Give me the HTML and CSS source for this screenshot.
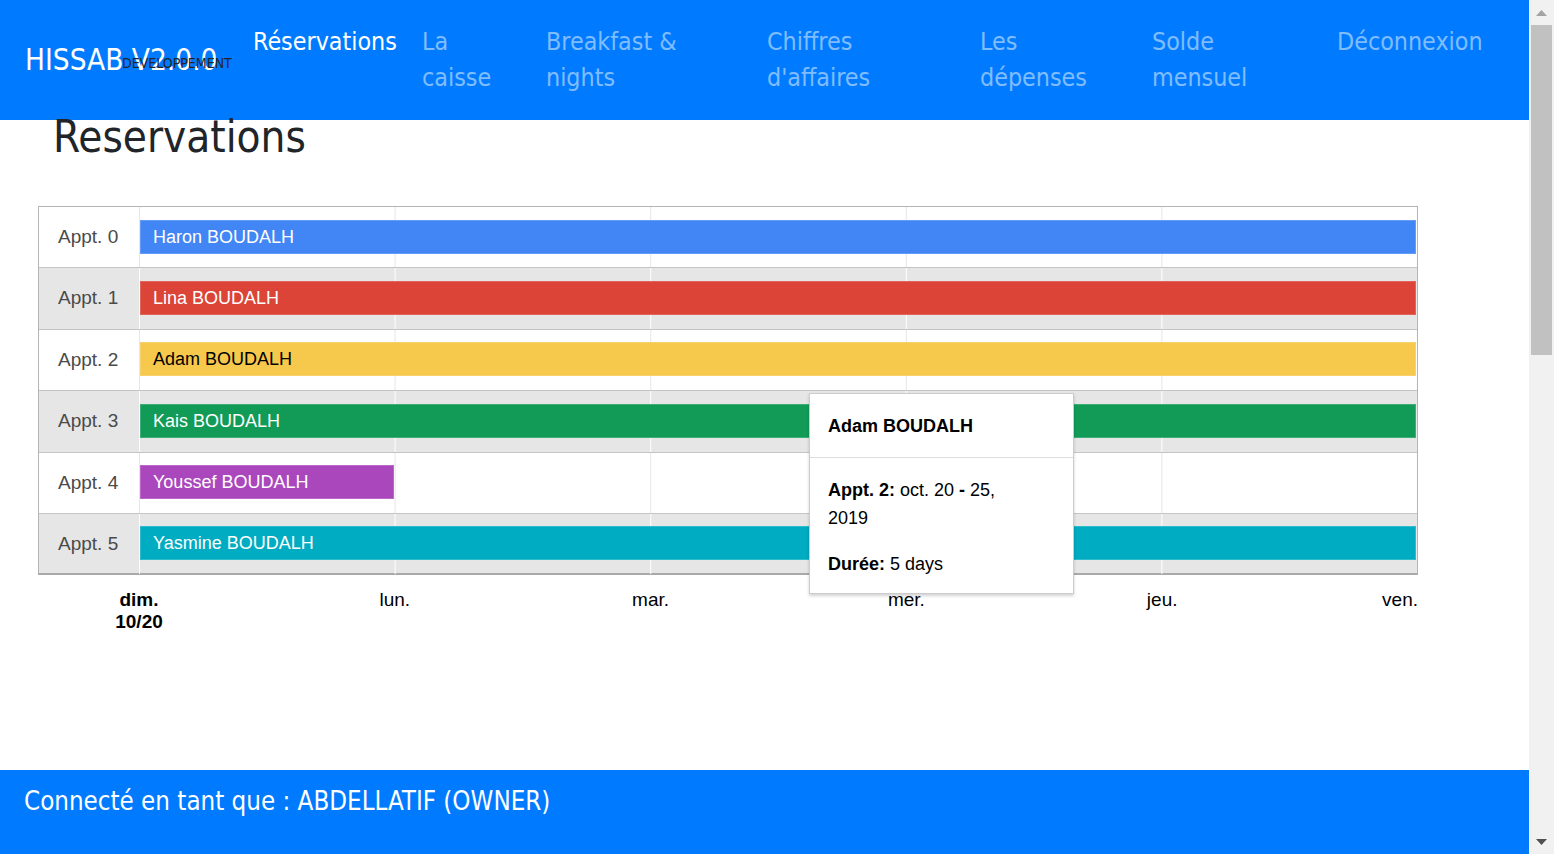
FILE: index.html
```html
<!DOCTYPE html>
<html lang="fr">
<head>
<meta charset="utf-8">
<title>HISSAB V2.0.0 – Réservations</title>
<link rel="stylesheet" href="styles.css">
</head>
<body>
<div class="window">
  <div class="app">
    <header class="topbar">
      <a class="brand">HISSAB V2.0.0<span class="env">DEVELOPPEMENT</span></a>
      <nav class="menu">
        <a class="menu-link active">Réservations</a>
        <a class="menu-link">La caisse</a>
        <a class="menu-link">Breakfast &amp; nights</a>
        <a class="menu-link">Chiffres d'affaires</a>
        <a class="menu-link">Les dépenses</a>
        <a class="menu-link">Solde mensuel</a>
        <a class="menu-link">Déconnexion</a>
      </nav>
    </header>

    <main class="content">
      <h1 class="page-title">Reservations</h1>

      <div class="timeline">
        <div class="rows">
          <div class="row">
            <div class="row-label">Appt. 0</div>
            <div class="track"><div class="bar bar-blue" style="width: calc(100% - 2px)">Haron BOUDALH</div></div>
          </div>
          <div class="row row-alt">
            <div class="row-label">Appt. 1</div>
            <div class="track"><div class="bar bar-red" style="width: calc(100% - 2px)">Lina BOUDALH</div></div>
          </div>
          <div class="row">
            <div class="row-label">Appt. 2</div>
            <div class="track"><div class="bar bar-yellow" style="width: calc(100% - 2px)">Adam BOUDALH</div></div>
          </div>
          <div class="row row-alt">
            <div class="row-label">Appt. 3</div>
            <div class="track"><div class="bar bar-green" style="width: calc(100% - 2px)">Kais BOUDALH</div></div>
          </div>
          <div class="row">
            <div class="row-label">Appt. 4</div>
            <div class="track"><div class="bar bar-purple" style="width: calc(20% - 2px)">Youssef BOUDALH</div></div>
          </div>
          <div class="row row-alt">
            <div class="row-label">Appt. 5</div>
            <div class="track"><div class="bar bar-teal" style="width: calc(100% - 2px)">Yasmine BOUDALH</div></div>
          </div>
        </div>

        <div class="axis">
          <div class="axis-track">
            <span class="tick tick-major" style="left: 0%">dim.<br>10/20</span>
            <span class="tick" style="left: 20%">lun.</span>
            <span class="tick" style="left: 40%">mar.</span>
            <span class="tick" style="left: 60%">mer.</span>
            <span class="tick" style="left: 80%">jeu.</span>
            <span class="tick tick-end">ven.</span>
          </div>
        </div>

        <div class="tooltip">
          <div class="tooltip-head">Adam BOUDALH</div>
          <div class="tooltip-body">
            <p class="tooltip-line"><b>Appt. 2:</b> oct. 20 <b>-</b> 25, 2019</p>
            <p class="tooltip-line"><b>Durée:</b> 5 days</p>
          </div>
        </div>
      </div>
    </main>

    <footer class="status">Connecté en tant que : ABDELLATIF (OWNER)</footer>
  </div>

  <div class="scrollbar" aria-hidden="true">
    <div class="sb-btn">
      <svg width="11" height="6" viewBox="0 0 11 6"><polygon points="0,6 5.5,0 11,6" fill="#a3a3a3"/></svg>
    </div>
    <div class="sb-thumb"></div>
    <div class="sb-space"></div>
    <div class="sb-btn">
      <svg width="11" height="6" viewBox="0 0 11 6"><polygon points="0,0 11,0 5.5,6" fill="#505050"/></svg>
    </div>
  </div>
</div>
</body>
</html>
```

FILE: styles.css
```css
* { box-sizing: border-box; }

html, body {
  margin: 0;
  padding: 0;
  height: 100%;
  overflow: hidden;
  background: #ffffff;
}

.window {
  display: flex;
  height: 854px;
}

.app {
  flex: 1;
  display: flex;
  flex-direction: column;
  min-width: 0;
}

/* ---------- Top bar ---------- */
.topbar {
  flex: none;
  height: 120px;
  background: #007bff;
  display: flex;
  align-items: center;
  padding-left: 25px;
  font-family: "DejaVu Sans Condensed", "DejaVu Sans", sans-serif;
  font-stretch: condensed;
}

.brand {
  position: relative;
  flex: none;
  width: 216px;
  color: #ffffff;
  font-size: 29.5px;
  line-height: 36px;
  white-space: nowrap;
}

.env {
  position: absolute;
  left: 97px;
  top: 13px;
  font-size: 14px;
  line-height: 16px;
  color: #212529;
}

.menu {
  display: grid;
  grid-template-columns: 169px 124px 221px 213px 172px 185px auto;
  align-items: start;
}

.menu-link {
  padding: 0 12px;
  font-size: 24.8px;
  line-height: 36px;
  color: rgba(255, 255, 255, 0.5);
}

.menu-link.active {
  color: #ffffff;
  white-space: nowrap;
}

/* ---------- Content ---------- */
.content {
  flex: 1;
  padding-left: 38px;
}

.page-title {
  margin: 0 0 0 15px;
  font-family: "DejaVu Sans Condensed", "DejaVu Sans", sans-serif;
  font-stretch: condensed;
  font-weight: normal;
  font-size: 43.6px;
  line-height: 34px;
  color: #212529;
}

.timeline {
  position: relative;
  width: 1380px;
  margin-top: 52px;
  font-family: "Liberation Sans", Arial, sans-serif;
}

.rows {
  border: 1px solid #b4b4b4;
  border-bottom: 2px solid #a9a9a9;
}

.row {
  display: grid;
  grid-template-columns: 100px 1fr;
  height: 61.4px;
  border-bottom: 1px solid #c4c4c4;
  background: #ffffff;
}

.row:last-child {
  height: 59px;
  border-bottom: 0;
}

.row-alt {
  background: #e6e6e6;
}

.row-label {
  padding-left: 19px;
  font-size: 19px;
  line-height: 60px;
  color: #4a4a4a;
}

.track {
  background-image: linear-gradient(to right, #e6e6e6 0, #e6e6e6 1px, transparent 1px);
  background-size: 20% 100%;
  background-repeat: repeat-x;
}

.row-alt .track {
  background-image: linear-gradient(to right, #ffffff 0, #ffffff 1px, transparent 1px);
}

.bar {
  height: 34px;
  margin: 12.5px 0 0 1px;
  padding-left: 13px;
  font-size: 18px;
  line-height: 34px;
  color: #ffffff;
  white-space: nowrap;
  overflow: hidden;
  box-shadow: inset 0 0 0 1px rgba(255, 255, 255, 0.18);
}

.bar-blue { background: #4285f4; }
.bar-red { background: #db4437; }
.bar-yellow { background: #f6c94c; color: #000000; }
.bar-green { background: #129b57; }
.bar-purple { background: #ab47bc; }
.bar-teal { background: #00acc1; }

/* ---------- Axis ---------- */
.axis {
  height: 70px;
  padding-left: 101px;
}

.axis-track {
  position: relative;
  height: 100%;
}

.tick {
  position: absolute;
  top: 14px;
  transform: translateX(-50%);
  font-size: 19px;
  line-height: 22px;
  color: #000000;
  text-align: center;
  white-space: nowrap;
}

.tick-major {
  font-weight: bold;
}

.tick-end {
  right: 0;
  transform: none;
}

/* ---------- Tooltip ---------- */
.tooltip {
  position: absolute;
  left: 771px;
  top: 187px;
  width: 265px;
  background: #ffffff;
  border: 1px solid #cccccc;
  box-shadow: 0 2px 3px rgba(0, 0, 0, 0.18);
  font-size: 18px;
  line-height: 28px;
  color: #000000;
}

.tooltip-head {
  padding: 18px 18px 17px;
  font-weight: bold;
  border-bottom: 1px solid #dddddd;
}

.tooltip-body {
  padding: 18px 18px 15px;
}

.tooltip-line {
  margin: 0;
  max-width: 200px;
}

.tooltip-line + .tooltip-line {
  margin-top: 18px;
}

/* ---------- Footer ---------- */
.status {
  flex: none;
  height: 84px;
  padding: 16px 0 0 24px;
  background: #007bff;
  color: #ffffff;
  font-family: "DejaVu Sans Condensed", "DejaVu Sans", sans-serif;
  font-stretch: condensed;
  font-size: 25.7px;
  line-height: 30px;
  white-space: nowrap;
}

/* ---------- Scrollbar ---------- */
.scrollbar {
  flex: none;
  width: 25px;
  display: flex;
  flex-direction: column;
  background: #f1f1f1;
}

.sb-btn {
  height: 25px;
  display: flex;
  align-items: center;
  justify-content: center;
}

.sb-thumb {
  height: 330px;
  margin: 0 2px;
  background: #c1c1c1;
}

.sb-space {
  flex: 1;
}
```
